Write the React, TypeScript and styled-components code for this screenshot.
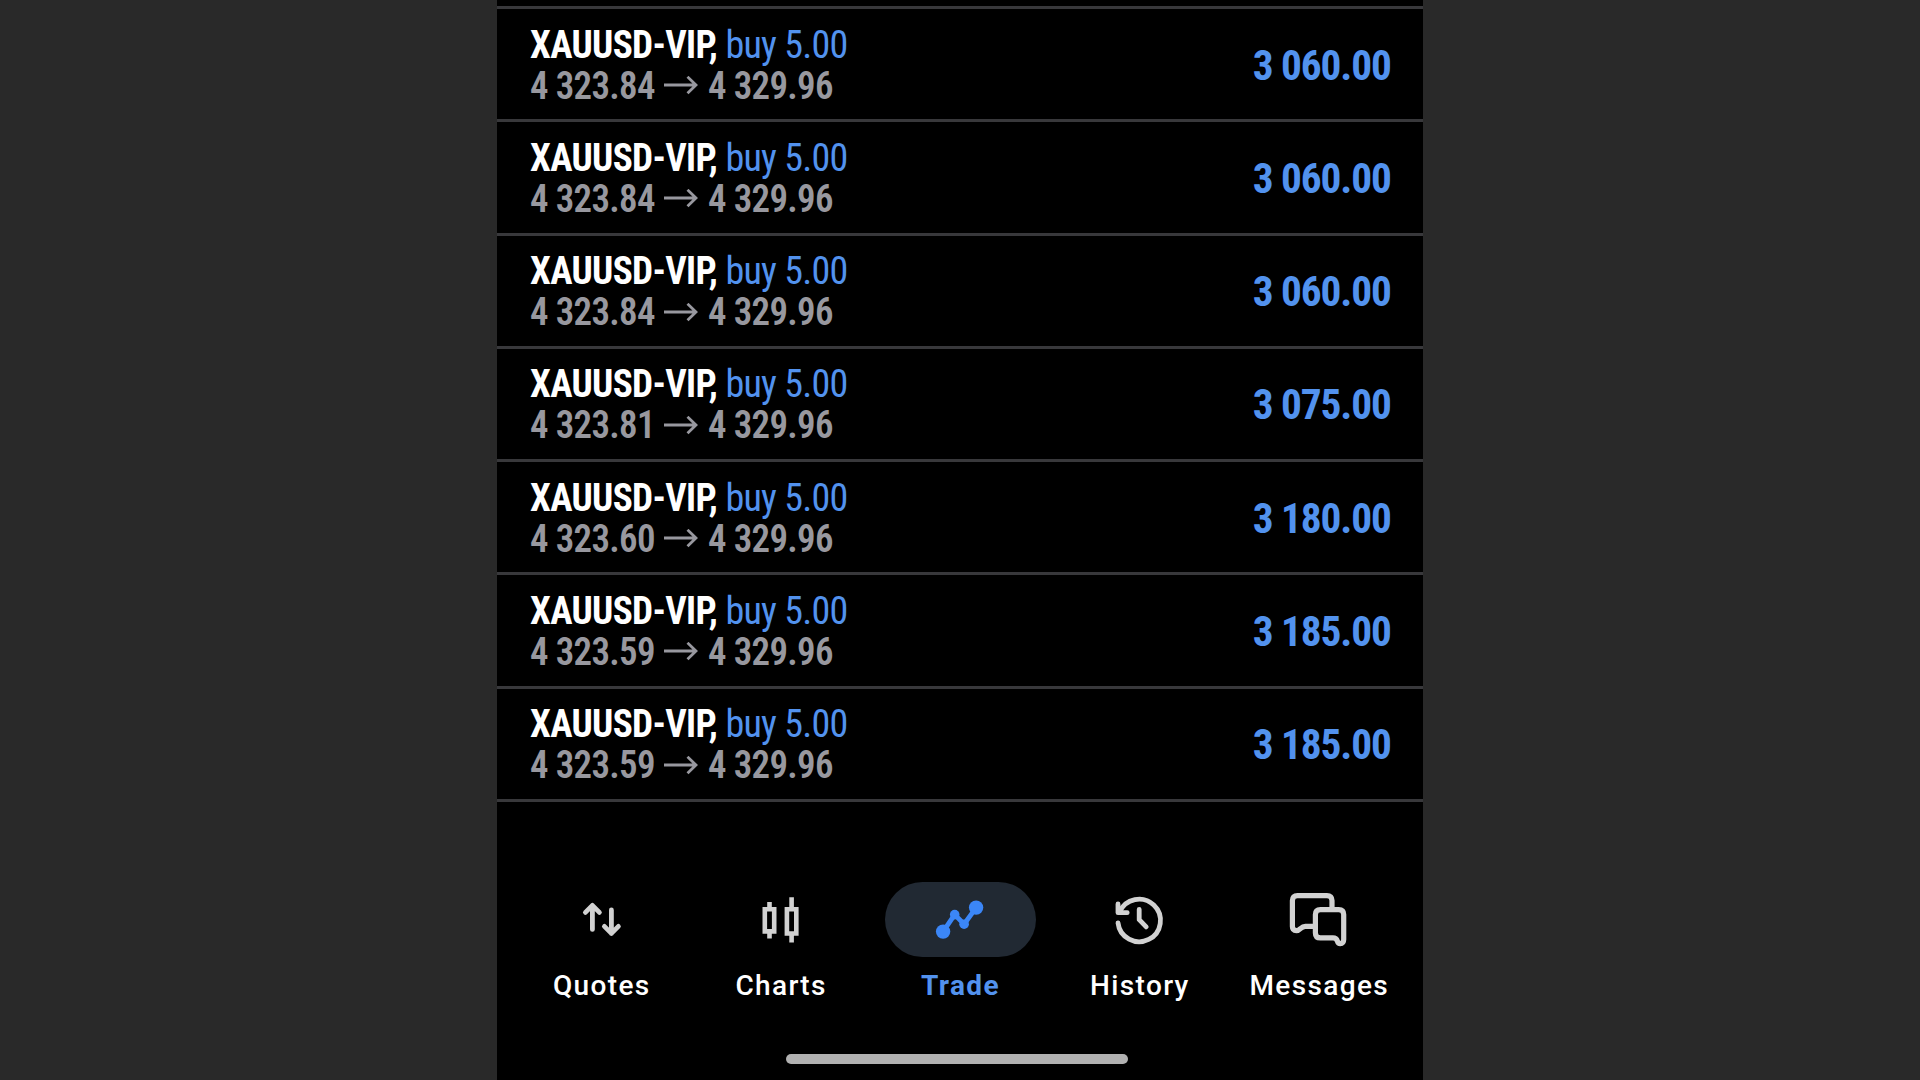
import React from "react";
import styled, { createGlobalStyle } from "styled-components";

const GlobalStyle = createGlobalStyle`
  * { box-sizing: border-box; }
  html, body { margin: 0; padding: 0; background: #292929; }
`;

const Stage = styled.div`
  display: flex;
  justify-content: center;
  width: 1920px;
  height: 1080px;
  overflow: hidden;
  background: #292929;
`;

const Phone = styled.main`
  display: flex;
  flex-direction: column;
  width: 926px;
  height: 1080px;
  background: #000;
  color: #fff;
  font-family: "Roboto Condensed", Roboto, sans-serif;
  font-stretch: 75%;
`;

const Positions = styled.ul`
  list-style: none;
  margin: 0;
  padding: 6px 0 0;
`;

const Position = styled.li`
  display: flex;
  justify-content: space-between;
  align-items: center;
  height: 113.25px;
  padding: 3px 32px 0 33px;
  border-top: 3px solid #38383b;

  &:last-child {
    height: 116.25px;
    border-bottom: 3px solid #38383b;
  }
`;

const Details = styled.div`
  display: flex;
  flex-direction: column;
`;

const Line = styled.div`
  display: flex;
  align-items: center;
  height: 41px;
  font-size: 38px;
  line-height: 41px;
  white-space: pre;
`;

const Symbol = styled.span`
  width: 195.5px;
  font-weight: 700;
  letter-spacing: -0.67px;
  transform: scaleX(0.98);
  transform-origin: left center;
`;

const Side = styled.span`
  color: #5292ee;
  font-weight: 400;
  letter-spacing: -0.75px;
`;

const Price = styled.span`
  margin-right: -4.3px;
  color: #98989f;
  font-weight: 600;
  letter-spacing: -0.7px;
  transform: scaleX(0.97);
  transform-origin: left center;
`;

const Arrow = styled.svg`
  width: 34px;
  height: 20px;
  margin: 0 10px;
`;

const Profit = styled.span`
  margin-bottom: 2px;
  color: #5292ee;
  font-size: 43px;
  line-height: 48px;
  font-weight: 700;
  letter-spacing: -1.13px;
  transform: scaleX(0.96);
  transform-origin: right center;
`;

const TabBar = styled.nav`
  display: grid;
  grid-template-columns: repeat(5, 179.4px);
  justify-content: center;
  margin-top: 80.25px;
  padding-left: 1px;
`;

const Tab = styled.div<{ $active?: boolean }>`
  display: flex;
  flex-direction: column;
  align-items: center;
  color: ${(p) => (p.$active ? "#5292ee" : "#fff")};
`;

const Pill = styled.div<{ $active?: boolean }>`
  display: flex;
  align-items: center;
  justify-content: center;
  width: 151px;
  height: 75px;
  border-radius: 38px;
  color: ${(p) => (p.$active ? "#3b86f7" : "#d2d2d2")};
  background: ${(p) => (p.$active ? "#212933" : "transparent")};
`;

const Glyph = styled.svg<{ $stroke?: number }>`
  width: 64px;
  height: 64px;
  fill: none;
  stroke: currentColor;
  stroke-width: ${(p) => p.$stroke ?? 4.8};
`;

const Label = styled.span<{ $active?: boolean }>`
  margin-top: 12px;
  font-family: Roboto, sans-serif;
  font-stretch: 100%;
  font-size: 28px;
  line-height: 34px;
  font-weight: ${(p) => (p.$active ? 700 : 500)};
  letter-spacing: 1.35px;
`;

const HomeIndicator = styled.div`
  align-self: center;
  width: 342px;
  height: 9.5px;
  margin: 51px 6px 0 0;
  border-radius: 5px;
  background: #b1b1b1;
`;

const positions = [
  { open: "4 323.84", profit: "3 060.00" },
  { open: "4 323.84", profit: "3 060.00" },
  { open: "4 323.84", profit: "3 060.00" },
  { open: "4 323.81", profit: "3 075.00" },
  { open: "4 323.60", profit: "3 180.00" },
  { open: "4 323.59", profit: "3 185.00" },
  { open: "4 323.59", profit: "3 185.00" },
];

const VIEW_BOX = "0.6 0.6 64 64";

const QuotesIcon = () => (
  <Glyph viewBox={VIEW_BOX} strokeLinecap="round" strokeLinejoin="round">
    <path d="M23 42V18.2M16 25l7-7 7 7M42 22.500V46M35 39l7 7 7-7" />
  </Glyph>
);

const ChartsIcon = () => (
  <Glyph viewBox={VIEW_BOX} $stroke={4.6}>
    <path d="M16.400 21.800h9.400v22.200h-9.400zM38.500 21.800h9.400v24.300h-9.400zM21.100 14.500v7M21.100 44v7M43.200 9.900v12M43.200 46v9" />
  </Glyph>
);

const TradeIcon = () => (
  <Glyph viewBox={VIEW_BOX}>
    <path d="M15.700 44.200L27.300 27.200l9.400 9.600L48.700 20.200" />
    <g fill="currentColor" stroke="none">
      <circle cx="15.7" cy="44.2" r="7.2" />
      <circle cx="27.3" cy="27.2" r="4.8" />
      <circle cx="36.7" cy="36.8" r="4.8" />
      <circle cx="48.7" cy="20.2" r="7.2" />
    </g>
  </Glyph>
);

const HistoryIcon = () => (
  <Glyph viewBox={VIEW_BOX} strokeLinecap="round" strokeLinejoin="round">
    <path d="M10.600 35.500A21.300 21.300 0 1 0 12.200 24.600" />
    <path d="M10.600 16.500v8.800h9.200M31.800 22v10.300l7 7.200" />
  </Glyph>
);

const MessagesIcon = () => (
  <Glyph viewBox={VIEW_BOX} $stroke={5.2} strokeLinecap="round" strokeLinejoin="round">
    <path d="M45.600 20v-6.800q0-5-5-5h-29.600q-5 0-5 5v26q0 4 4 4q2 0 4-2q2.500-2.200 5-2.200h9" />
    <path d="M34 22.200h18.300q5 0 5 5v25q0 4-3.500 4q-2 0-2.800-2.500q-1-3.200-4.500-3.200h-12.500q-5 0-5-5v-18.300q0-5 5-5z" />
  </Glyph>
);

const tabs = [
  { label: "Quotes", icon: <QuotesIcon /> },
  { label: "Charts", icon: <ChartsIcon /> },
  { label: "Trade", icon: <TradeIcon />, active: true },
  { label: "History", icon: <HistoryIcon /> },
  { label: "Messages", icon: <MessagesIcon /> },
];

export default function App() {
  return (
    <Stage>
      <GlobalStyle />
      <Phone>
        <Positions>
          {positions.map((p, i) => (
            <Position key={i}>
              <Details>
                <Line>
                  <Symbol>XAUUSD-VIP,</Symbol>
                  <Side>buy 5.00</Side>
                </Line>
                <Line>
                  <Price>{p.open}</Price>
                  <Arrow viewBox="0 0 34 20" fill="none" stroke="#98989f" strokeWidth="2.8">
                    <path d="M0 9h32M23.500 0.800l8.500 8.200-8.500 8.200" />
                  </Arrow>
                  <Price>4 329.96</Price>
                </Line>
              </Details>
              <Profit>{p.profit}</Profit>
            </Position>
          ))}
        </Positions>
        <TabBar>
          {tabs.map((t) => (
            <Tab key={t.label} $active={t.active}>
              <Pill $active={t.active}>{t.icon}</Pill>
              <Label $active={t.active}>{t.label}</Label>
            </Tab>
          ))}
        </TabBar>
        <HomeIndicator />
      </Phone>
    </Stage>
  );
}
